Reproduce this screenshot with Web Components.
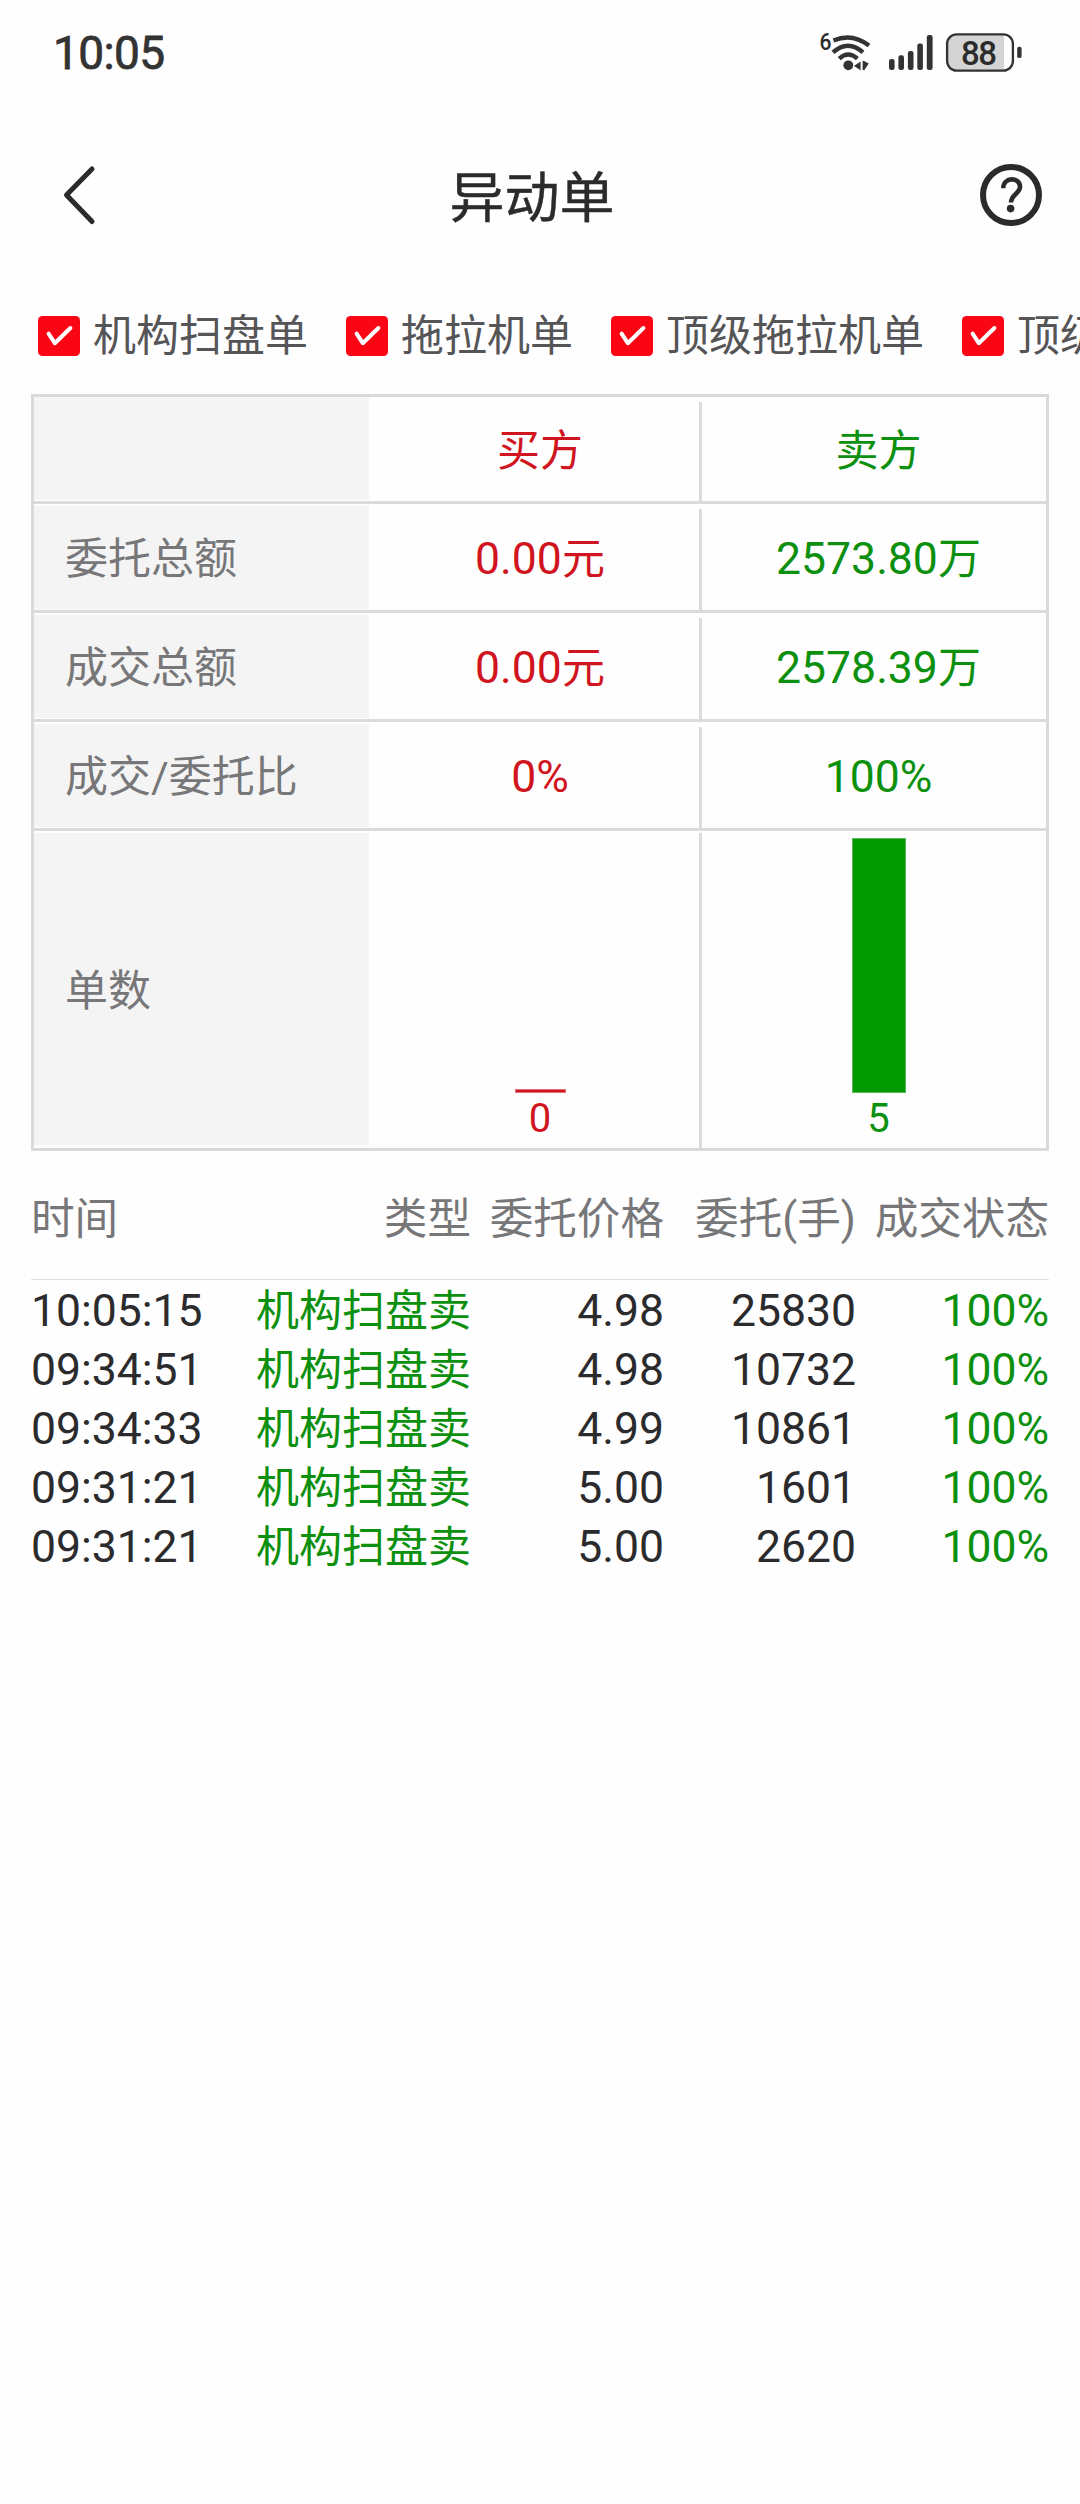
<!DOCTYPE html>
<html lang="zh-CN">
<head>
<meta charset="UTF-8">
<title>异动单</title>
<style>
  html, body { margin: 0; padding: 0; }
  body {
    width: 1080px;
    height: 2504px;
    overflow: hidden;
    background: #fefefe;
    color: #2b2b2d;
    font-family: Roboto, 'Noto Sans CJK SC', sans-serif;
    font-size: 43px;
  }
</style>
</head>
<body>
<order-page></order-page>

<script>
/* ─── STATUS BAR ─── */
class StatusBar extends HTMLElement {
  constructor() {
    super();
    this.attachShadow({ mode: 'open' }).innerHTML = `
      <style>
        :host {
          display: flex;
          justify-content: space-between;
          align-items: center;
          height: 106px;
          padding: 0 57px 0 53px;
          box-sizing: border-box;
          color: #333;
        }
        .time { font-size: 46px; font-weight: 400; line-height: 60px; letter-spacing: -0.6px; -webkit-text-stroke: 0.8px; }
        svg { display: block; }
        text { font-family: Roboto, sans-serif; font-weight: 500; fill: #2b2b2b; }
      </style>
      <span class="time">${this.getAttribute('time')}</span>
      <svg width="213" height="56" viewBox="810 24 213 56" fill="none" stroke="#333">
        <text x="819.6" y="49.4" font-size="23" textLength="12" lengthAdjust="spacingAndGlyphs" stroke="none">6</text>
        <!-- wifi -->
        <g stroke-width="4.4">
          <path d="M833.5 39.6 Q852 31.5 869 44.6" />
          <path d="M833 51.4 Q848 38 863 51.4" />
          <path d="M839.2 57.6 Q848.2 49.5 857.4 57.6" />
        </g>
        <g fill="#333" stroke="none">
          <circle cx="848.3" cy="64.3" r="4.9" />
          <path d="M854 65 L860.6 60.4 V69.2 Z M862.6 60 H864 L868.8 62.5 L864.4 69 H862.6 Z" />
          <rect x="889" y="58" width="5.6" height="11" rx="2.2" />
          <rect x="898.4" y="54.3" width="5.6" height="14.7" rx="2.2" />
          <rect x="907.9" y="50" width="5.6" height="19" rx="2.2" />
          <rect x="917.3" y="42.6" width="5.6" height="26.4" rx="2.2" />
          <rect x="926.8" y="34" width="5.8" height="35" rx="2.2" />
        </g>
        <!-- battery -->
        <path d="M956 34 H1004 V69 H956 Q948 69 948 61 V42 Q948 34 956 34 Z" fill="#d4d4d4" stroke="none" />
        <rect x="947.1" y="33.4" width="65.8" height="36.2" rx="9.5" stroke-width="2.3" />
        <rect x="1017.2" y="45.8" width="4.4" height="11.2" rx="1.8" fill="#333" stroke="none" />
        <text x="961" y="63.8" font-size="33" textLength="36" stroke="none">${this.getAttribute('battery')}</text>
      </svg>
    `;
  }
}
customElements.define('status-bar', StatusBar);

/* ─── NAV BAR ─── */
class NavBar extends HTMLElement {
  constructor() {
    super();
    this.attachShadow({ mode: 'open' }).innerHTML = `
      <style>
        :host {
          display: grid;
          grid-template-columns: 80px 1fr 80px;
          align-items: center;
          height: 178px;
          padding: 0 37px 0 48px;
          box-sizing: border-box;
        }
        h1 {
          margin: 0;
          padding: 6px 27px 0 0;
          font-size: 55px;
          font-weight: 400;
          line-height: 80px;
          text-align: center;
          -webkit-text-stroke: 0.4px;
        }
        svg { display: block; fill: none; stroke: #2b2b2d; }
        .help { justify-self: end; }
      </style>
      <svg width="60" height="64" viewBox="0 0 60 64">
        <path d="M44 6 L18.5 32 L44 58.5" stroke-width="5" stroke-linecap="round" stroke-linejoin="round" />
      </svg>
      <h1><slot></slot></h1>
      <svg class="help" width="64" height="64" viewBox="0 0 64 64">
        <circle cx="32" cy="32" r="28" stroke-width="6" />
        <path d="M24.3 25.2 C24.3 13.5 41 13.8 41 23.8 C41 31 32 31 32 39.6" stroke-width="4.6" />
        <circle cx="31.6" cy="45.6" r="3.8" fill="#2b2b2d" stroke="none" />
      </svg>
    `;
  }
}
customElements.define('nav-bar', NavBar);

/* ─── FILTER CHECKBOX ─── */
class FilterCheck extends HTMLElement {
  constructor() {
    super();
    this.attachShadow({ mode: 'open' }).innerHTML = `
      <style>
        :host {
          display: flex;
          flex: none;
          align-items: center;
          gap: 13px;
          color: #555557;
          line-height: 64px;
          white-space: nowrap;
        }
        svg { display: block; flex: none; }
      </style>
      <svg width="42" height="40" viewBox="0 0 42 40">
        <rect width="42" height="40" rx="4.5" fill="#fa0513" />
        <path d="M10.6 17.6 L16.8 27.2 L32.4 12" fill="none" stroke="#fff" stroke-width="4" stroke-linecap="round" stroke-linejoin="round" />
      </svg>
      <span><slot></slot></span>
    `;
  }
}
customElements.define('filter-check', FilterCheck);

/* ─── SUMMARY TABLE ROW ─── */
class SummaryRow extends HTMLElement {
  constructor() {
    super();
    this.attachShadow({ mode: 'open' }).innerHTML = `
      <style>
        :host {
          display: grid;
          grid-template-columns: 335px 333px 1fr;
          height: 109px;
          box-sizing: border-box;
          border-bottom: 3px solid #dbdbdb;
        }
        :host([first]) { height: 107px; }
        :host([last]) { height: 317px; border-bottom: 0; }
        .cell {
          display: flex;
          align-items: center;
          justify-content: center;
          line-height: 64px;
        }
        .label {
          justify-content: flex-start;
          margin: 2px 0 1px;
          padding: 3px 0 0 31px;
          background: #f4f4f4;
          color: #777779;
        }
        :host([first]) .label { margin-top: 0; }
        :host([last]) .label { margin-bottom: 3px; }
        .buy, .sell { padding: 4px 0 0 9px; }
        .buy {
          color: #d01520;
          background: linear-gradient(#dbdbdb, #dbdbdb) right 0 top 5px / 3px 100% no-repeat;
        }
        :host([last]) .buy { background-position: right 0 top 2px; }
        .sell { color: #0c900e; }
      </style>
      <div class="cell label"><slot name="label"></slot></div>
      <div class="cell buy"><slot name="buy"></slot></div>
      <div class="cell sell"><slot name="sell"></slot></div>
    `;
  }
}
customElements.define('summary-row', SummaryRow);

/* ─── AMOUNT: number with an optional unit ─── */
class AmountText extends HTMLElement {
  constructor() {
    super();
    this.attachShadow({ mode: 'open' }).innerHTML = `
      <style>
        :host { display: block; font-size: 44.5px; white-space: nowrap; }
        span { font-size: 43px; }
      </style>
      <slot></slot><span>${this.getAttribute('unit') || ''}</span>
    `;
  }
}
customElements.define('amount-text', AmountText);

/* ─── COUNT BAR ─── */
class CountBar extends HTMLElement {
  constructor() {
    super();
    const value = Number(this.getAttribute('value'));
    const max = Number(this.getAttribute('max'));
    const height = Math.max(4, Math.round(255 * value / max));
    this.attachShadow({ mode: 'open' }).innerHTML = `
      <style>
        :host {
          display: flex;
          flex-direction: column;
          justify-content: flex-end;
          align-items: center;
          align-self: stretch;
          padding: 0 0 4px;
          font-size: 40px;
          line-height: 51px;
        }
        .bar {
          width: ${value ? 54 : 51}px;
          height: ${height}px;
          box-sizing: border-box;
          background: ${value ? '#009900' : '#d01520'};
          border: 1px solid ${value ? '#5fb45f' : '#e0707a'};
        }
      </style>
      <div class="bar"></div>
      <div>${value}</div>
    `;
  }
}
customElements.define('count-bar', CountBar);

/* ─── ORDER LIST ─── */
class OrderList extends HTMLElement {
  constructor() {
    super();
    const orders = [
      ['10:05:15', '机构扫盘卖', '4.98', '25830', '100%'],
      ['09:34:51', '机构扫盘卖', '4.98', '10732', '100%'],
      ['09:34:33', '机构扫盘卖', '4.99', '10861', '100%'],
      ['09:31:21', '机构扫盘卖', '5.00', '1601', '100%'],
      ['09:31:21', '机构扫盘卖', '5.00', '2620', '100%'],
    ];
    this.attachShadow({ mode: 'open' }).innerHTML = `
      <style>
        :host { display: block; margin: 0 31px; }
        .row {
          display: grid;
          grid-template-columns: 200px 240px 193px 192px 193px;
          align-items: center;
          height: 59px;
          line-height: 56px;
          padding-top: 3px;
          box-sizing: border-box;
          white-space: nowrap;
        }
        .row > * { text-align: right; }
        .row > :first-child { text-align: left; }
        .head {
          height: 129px;
          padding-top: 9px;
          border-bottom: 1px solid #e2e2e2;
          color: #777779;
          font-size: 43.6px;
        }
        .num { font-size: 44.5px; }
        .green { color: #0c900e; }
      </style>
      <div class="row head">
        <span>时间</span><span>类型</span><span>委托价格</span><span>委托(手)</span><span>成交状态</span>
      </div>
      ${orders.map(([time, type, price, lots, state]) => `
        <div class="row">
          <span class="num">${time}</span>
          <span class="green">${type}</span>
          <span class="num">${price}</span>
          <span class="num">${lots}</span>
          <span class="num green">${state}</span>
        </div>`).join('')}
    `;
  }
}
customElements.define('order-list', OrderList);

/* ─── PAGE ─── */
class OrderPage extends HTMLElement {
  constructor() {
    super();
    this.attachShadow({ mode: 'open' }).innerHTML = `
      <style>
        :host { display: block; }
        .filters {
          display: flex;
          align-items: center;
          gap: 38px;
          height: 104px;
          padding-left: 38px;
          overflow: hidden;
        }
        .summary {
          margin: 6px 31px 0;
          border: 3px solid #dadada;
        }
      </style>
      <status-bar time="10:05" battery="88"></status-bar>
      <nav-bar>异动单</nav-bar>
      <div class="filters">
        <filter-check>机构扫盘单</filter-check>
        <filter-check>拖拉机单</filter-check>
        <filter-check>顶级拖拉机单</filter-check>
        <filter-check>顶级</filter-check>
      </div>
      <div class="summary">
        <summary-row first>
          <span slot="buy">买方</span>
          <span slot="sell">卖方</span>
        </summary-row>
        <summary-row>
          <span slot="label">委托总额</span>
          <amount-text slot="buy" unit="元">0.00</amount-text>
          <amount-text slot="sell" unit="万">2573.80</amount-text>
        </summary-row>
        <summary-row>
          <span slot="label">成交总额</span>
          <amount-text slot="buy" unit="元">0.00</amount-text>
          <amount-text slot="sell" unit="万">2578.39</amount-text>
        </summary-row>
        <summary-row>
          <span slot="label">成交/委托比</span>
          <amount-text slot="buy">0%</amount-text>
          <amount-text slot="sell">100%</amount-text>
        </summary-row>
        <summary-row last>
          <span slot="label">单数</span>
          <count-bar slot="buy" value="0" max="5"></count-bar>
          <count-bar slot="sell" value="5" max="5"></count-bar>
        </summary-row>
      </div>
      <order-list></order-list>
    `;
  }
}
customElements.define('order-page', OrderPage);
</script>
</body>
</html>
